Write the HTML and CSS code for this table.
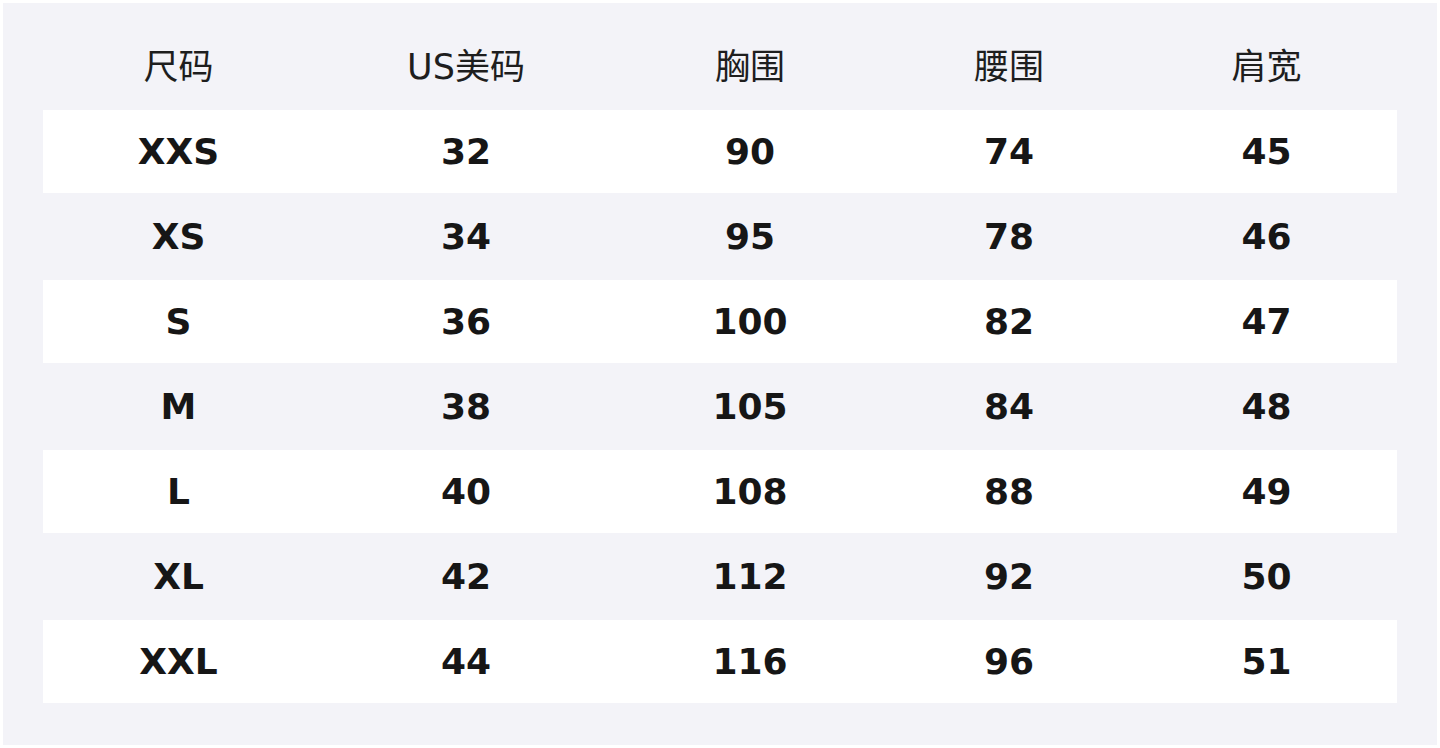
FILE: index.html
```html
<!DOCTYPE html>
<html lang="zh">
<head>
<meta charset="utf-8">
<link rel="stylesheet" href="styles.css">
</head>
<body>
<div class="frame">
  <div class="table">
    <div class="row head"><div>尺码</div><div>US美码</div><div>胸围</div><div>腰围</div><div>肩宽</div></div>
    <div class="row alt"><div>XXS</div><div>32</div><div>90</div><div>74</div><div>45</div></div>
    <div class="row"><div>XS</div><div>34</div><div>95</div><div>78</div><div>46</div></div>
    <div class="row alt"><div>S</div><div>36</div><div>100</div><div>82</div><div>47</div></div>
    <div class="row"><div>M</div><div>38</div><div>105</div><div>84</div><div>48</div></div>
    <div class="row alt"><div>L</div><div>40</div><div>108</div><div>88</div><div>49</div></div>
    <div class="row"><div>XL</div><div>42</div><div>112</div><div>92</div><div>50</div></div>
    <div class="row alt"><div>XXL</div><div>44</div><div>116</div><div>96</div><div>51</div></div>
  </div>
</div>
</body>
</html>
```
FILE: styles.css
```css
html, body {
  margin: 0;
  padding: 0;
  background: #ffffff;
}
body {
  width: 1440px;
  height: 748px;
  padding: 3px;
  box-sizing: border-box;
  font-family: "DejaVu Sans", "Noto Sans CJK SC", sans-serif;
}
.frame {
  background: #f3f3f8;
  height: 742px;
  padding: 22px 40px 42px;
  box-sizing: border-box;
}
.table {
  display: flex;
  flex-direction: column;
  gap: 2px;
}
.row {
  display: grid;
  grid-template-columns: 271px 304px 264px 254px 261px;
  height: 83px;
  align-items: center;
  text-align: center;
  font-size: 36px;
  font-weight: bold;
  color: #161616;
}
.row.alt {
  background: #ffffff;
}
.row.head {
  font-weight: normal;
  font-size: 35px;
  color: #1e1e1e;
  padding-bottom: 6px;
  box-sizing: border-box;
}
```
